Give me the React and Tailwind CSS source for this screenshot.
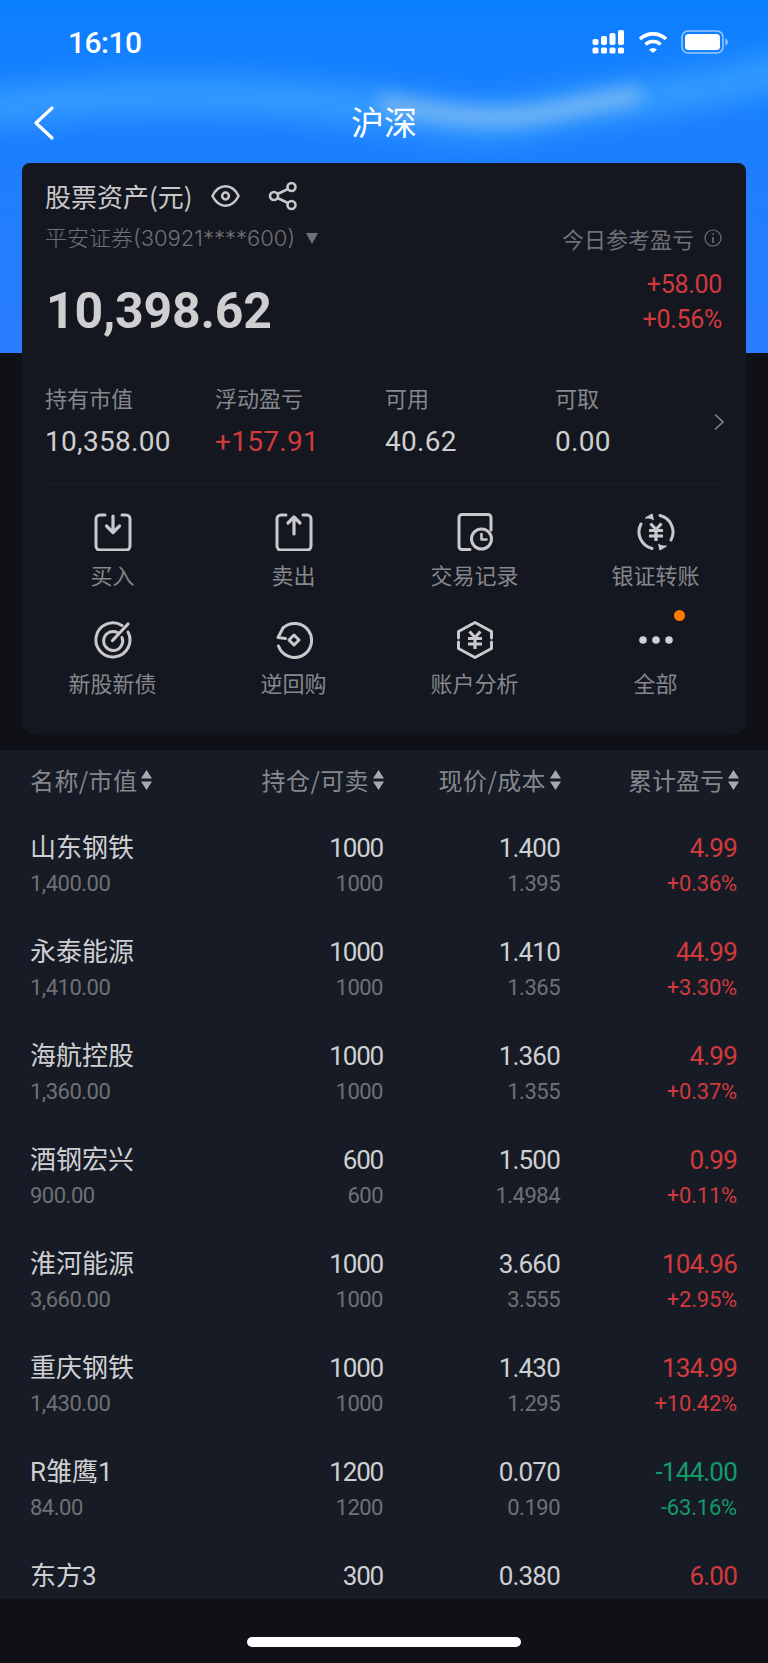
const cjk = '"Noto Sans CJK SC", sans-serif';
const num = 'Roboto, "Noto Sans CJK SC", sans-serif';

const STATS = [
  { label: '持有市值', value: '10,358.00' },
  { label: '浮动盈亏', value: '+157.91', red: true },
  { label: '可用', value: '40.62' },
  { label: '可取', value: '0.00' },
];

const HEADS = ['名称/市值', '持仓/可卖', '现价/成本', '累计盈亏'];

const ROWS = [
  ['山东钢铁', '1,400.00', '1000', '1000', '1.400', '1.395', '4.99', '+0.36%'],
  ['永泰能源', '1,410.00', '1000', '1000', '1.410', '1.365', '44.99', '+3.30%'],
  ['海航控股', '1,360.00', '1000', '1000', '1.360', '1.355', '4.99', '+0.37%'],
  ['酒钢宏兴', '900.00', '600', '600', '1.500', '1.4984', '0.99', '+0.11%'],
  ['淮河能源', '3,660.00', '1000', '1000', '3.660', '3.555', '104.96', '+2.95%'],
  ['重庆钢铁', '1,430.00', '1000', '1000', '1.430', '1.295', '134.99', '+10.42%'],
  ['R雏鹰1', '84.00', '1200', '1200', '0.070', '0.190', '-144.00', '-63.16%'],
  ['东方3', '', '300', '', '0.380', '', '6.00', ''],
];

function Glyph({ children }) {
  return (
    <svg width="38" height="38" viewBox="0 0 38 38" fill="none" stroke="#c9c9cb" strokeWidth="3" strokeLinecap="round" strokeLinejoin="round">
      {children}
    </svg>
  );
}

const Yen = () => <path d="M13.500 10.500 19 16.500l5.500-6M12 17.500h14M12 23h14M19 16.500V28" strokeWidth="3.200" strokeLinecap="butt" strokeLinejoin="miter" />;

const ICONS = {
  buy: (
    <Glyph>
      <path d="M11 2H6a4 4 0 0 0-4 4v27a4 4 0 0 0 4 4h26a4 4 0 0 0 4-4V6a4 4 0 0 0-4-4h-4" />
      <path d="M19 3v16M12.500 13l6.500 6.500 6.500-6.500" strokeWidth="3.200" />
    </Glyph>
  ),
  sell: (
    <Glyph>
      <path d="M11 2H6a4 4 0 0 0-4 4v27a4 4 0 0 0 4 4h26a4 4 0 0 0 4-4V6a4 4 0 0 0-4-4h-4" />
      <path d="M19 21V4M13 10l6-6 6 6" strokeWidth="3.200" />
    </Glyph>
  ),
  record: (
    <Glyph>
      <path d="M14 36.500H6a3 3 0 0 1-3-3V4.500a3 3 0 0 1 3-3h26a3 3 0 0 1 3 3V17" />
      <circle cx="25.500" cy="26" r="10" />
      <path d="M25.500 21v5.500h5" strokeWidth="2.600" />
    </Glyph>
  ),
  transfer: (
    <Glyph>
      <path d="M23 2.500a17 17 0 0 1 11 24.500M15 35.500A17 17 0 0 1 4 11" />
      <path d="M9 5l6-3.500 1 5M29 33l-6 3.500-1-5" fill="#c9c9cb" strokeWidth="1.500" />
      <Yen />
    </Glyph>
  ),
  target: (
    <Glyph>
      <path d="M28 4.500A17 17 0 1 0 34 11" />
      <path d="M23.500 11.500A9.500 9.500 0 1 0 28 16.500" />
      <path d="M18.500 19.500 34 3" strokeWidth="3.200" />
    </Glyph>
  ),
  repo: (
    <Glyph>
      <path d="M8 7A17 17 0 1 1 3.500 25" />
      <path d="M8 7 3 16.500l7.500 1" />
      <path d="M19 14 24 19 19 24 14 19z" />
    </Glyph>
  ),
  analysis: (
    <Glyph>
      <path d="M2.500 17v-6.500L19 1.500l16.500 9V17M2.500 21v6.500l16.500 9 16.500-9V21" />
      <Yen />
    </Glyph>
  ),
  more: (
    <svg width="38" height="38" viewBox="0 0 38 38" fill="#d0d0d2">
      <circle cx="6" cy="19" r="3.800" />
      <circle cx="19" cy="19" r="3.800" />
      <circle cx="32" cy="19" r="3.800" />
    </svg>
  ),
};

const ACTIONS = [
  { label: '买入', icon: 'buy' },
  { label: '卖出', icon: 'sell' },
  { label: '交易记录', icon: 'record' },
  { label: '银证转账', icon: 'transfer' },
  { label: '新股新债', icon: 'target' },
  { label: '逆回购', icon: 'repo' },
  { label: '账户分析', icon: 'analysis' },
  { label: '全部', icon: 'more', dot: true },
];

function StatusBar() {
  return (
    <div className="relative flex h-[84px] items-center justify-between pl-[68px] pr-[40px]">
      <span className="text-[30px] font-medium tracking-[-0.5px] text-white" style={{ fontFamily: num }}>16:10</span>
      <div className="flex items-center">
        <svg width="33" height="24" viewBox="0 0 32 24" fill="#fff">
          <rect x="0" y="9" width="6" height="6" rx="2" />
          <rect x="8.500" y="6" width="6" height="9" rx="2" />
          <rect x="17" y="3" width="6" height="12" rx="2" />
          <rect x="25.500" y="0" width="6" height="15" rx="2" />
          <rect x="0" y="17.500" width="6" height="6" rx="1.500" />
          <rect x="8.500" y="17.500" width="6" height="6" rx="1.500" />
          <rect x="17" y="17.500" width="6" height="6" rx="1.500" />
          <rect x="25.500" y="17.500" width="6" height="6" rx="1.500" />
        </svg>
        <svg className="ml-[13px]" width="30" height="22" viewBox="0 0 30 22" fill="none" stroke="#fff" strokeWidth="3.600">
          <path d="M2 8a19 19 0 0 1 26 0" />
          <path d="M7.500 13.500a11 11 0 0 1 15 0" />
          <path d="M11 18.500 15 22l4-3.500a6 6 0 0 0-8 0z" fill="#fff" stroke="none" />
        </svg>
        <svg className="ml-[13px]" width="47" height="24" viewBox="0 0 47 24">
          <rect x="1" y="1" width="41" height="22" rx="6" fill="none" stroke="#9cc8ff" strokeWidth="1.500" />
          <rect x="4" y="4" width="35" height="16" rx="3.500" fill="#fff" />
          <path d="M44.500 8.500c1.500.5 2.300 2 2.300 3.500s-.8 3-2.300 3.500z" fill="#9cc8ff" />
        </svg>
      </div>
    </div>
  );
}

function Sorter() {
  return (
    <svg className="ml-[4px]" width="11" height="20" viewBox="0 0 11 20" fill="#a7a9ae">
      <path d="M5.500 0 11 8.500H0zM0 11.500h11L5.500 20z" />
    </svg>
  );
}

function Holding({ row }) {
  const [name, value, qty, avail, price, cost, pnl, pct] = row;
  const color = pnl.startsWith('-') ? 'text-[#14996a]' : 'text-[#d13a3d]';
  const big = 'h-[36px] text-[26px] leading-[36px] tracking-[-0.8px]';
  const small = 'h-[35px] text-[22px] leading-[35px] tracking-[-0.5px]';
  return (
    <div className="mb-[6px] grid h-[98px] shrink-0 grid-cols-[170px_183px_177px_177px]" style={{ fontFamily: num }}>
      <div>
        <div className={`${big} text-[#cfcfd1] !tracking-normal`}>{name}</div>
        <div className={`${small} text-[#6e7176]`}>{value}</div>
      </div>
      <div className="text-right">
        <div className={`${big} text-[#cfcfd1] !tracking-[-1.2px]`}>{qty}</div>
        <div className={`${small} text-[#6e7176]`}>{avail}</div>
      </div>
      <div className="text-right">
        <div className={`${big} text-[#cfcfd1]`}>{price}</div>
        <div className={`${small} text-[#6e7176]`}>{cost}</div>
      </div>
      <div className="text-right">
        <div className={`${big} ${color}`}>{pnl}</div>
        <div className={`${small} !tracking-[-0.2px] ${color}`}>{pct}</div>
      </div>
    </div>
  );
}

export default function App() {
  return (
    <div className="flex h-[1663px] w-[768px] flex-col overflow-hidden bg-[#0f1116]">
      {/* blue top with the wave behind the nav */}
      <div className="relative h-[353px] shrink-0 bg-gradient-to-b from-[#0a80ff] to-[#2a7cff]">
        <svg className="absolute left-0 top-0" width="768" height="220" viewBox="0 0 768 220">
          <defs>
            <filter id="soft" x="-20%" y="-100%" width="140%" height="300%">
              <feGaussianBlur stdDeviation="14" />
            </filter>
            <filter id="softer" x="-20%" y="-100%" width="140%" height="300%">
              <feGaussianBlur stdDeviation="9" />
            </filter>
          </defs>
          <path d="M-20 110C100 92 220 92 340 104 430 114 480 130 540 114 620 98 700 96 790 68" fill="none" stroke="#4ab0ff" strokeOpacity="0.6" strokeWidth="36" filter="url(#soft)" />
          <path d="M380 102C430 112 490 124 550 112 585 105 610 100 640 94" fill="none" stroke="#c8d8e6" strokeOpacity="0.55" strokeWidth="15" filter="url(#softer)" />
        </svg>
        <StatusBar />
        <div className="relative flex h-[76px] items-center justify-center">
          <svg className="absolute left-[32px] top-[21px]" width="24" height="36" viewBox="0 0 24 36" fill="none" stroke="#fff" strokeWidth="3.200" strokeLinecap="round" strokeLinejoin="round">
            <path d="M20 3 4 18l16 15" />
          </svg>
          <span className="text-[33px] text-white" style={{ fontFamily: cjk }}>沪深</span>
        </div>
      </div>

      <div className="relative z-10 mx-[22px] -mt-[190px] h-[572px] shrink-0 rounded-t-[8px] rounded-b-[14px] bg-[#14171f] pt-[17px]" style={{ fontFamily: cjk }}>
        <div className="px-[23px]">
          <div className="flex h-[32px] items-center">
            <span className="text-[26px] leading-[32px] text-[#c8c8ca]">股票资产(元)</span>
            <svg className="ml-[18px]" width="29" height="24" viewBox="0 0 30 24" fill="none" stroke="#c8c8ca" strokeWidth="2.600">
              <path d="M1.500 12C5 5 10 2 15 2s10 3 13.500 10C25 19 20 22 15 22S5 19 1.500 12z" />
              <circle cx="15" cy="12" r="3.500" />
            </svg>
            <svg className="ml-[28px]" width="30" height="30" viewBox="0 0 30 30" fill="none" stroke="#c8c8ca" strokeWidth="2.600">
              <circle cx="23.500" cy="6" r="4" />
              <circle cx="6" cy="15" r="4" />
              <circle cx="23.500" cy="24" r="4" />
              <path d="M9.500 13 20 8M9.500 17 20 22" />
            </svg>
          </div>
          <div className="mt-[10px] flex h-[32px] items-center justify-between text-[22px] leading-[32px] text-[#6f7176]">
            <div className="flex items-center">
              <span className="font-light" style={{ fontFamily: 'Inter, "Noto Sans CJK SC", sans-serif' }}>平安证券(30921****600)</span>
              <svg className="ml-[11px]" width="12" height="11" viewBox="0 0 12 11" fill="#6f7176"><path d="M0 0h12L6 11z" /></svg>
            </div>
            <div className="mr-[1px] flex items-center">
              <span>今日参考盈亏</span>
              <svg className="ml-[10px]" width="18" height="18" viewBox="0 0 18 18" fill="none" stroke="#6f7176" strokeWidth="1.200">
                <circle cx="9" cy="9" r="8" />
                <path d="M9 8v6M9 4.500v1.500" strokeWidth="1.600" />
              </svg>
            </div>
          </div>
          <div className="mt-[11px] flex items-start justify-between" style={{ fontFamily: num }}>
            <div className="ml-[1px] mt-[19px] text-[50px] font-bold leading-[54px] tracking-[-0.2px] text-[#cfcfd1]">10,398.62</div>
            <div className="mr-[1px] mt-[2px] text-right text-[25px] leading-[35px] tracking-[-0.3px] text-[#d13a3d]">
              <div>+58.00</div>
              <div>+0.56%</div>
            </div>
          </div>
          <div className="relative mt-[43px] grid grid-cols-[170px_170px_170px_170px]">
            {STATS.map(s => (
              <div key={s.label}>
                <div className="h-[32px] text-[22px] leading-[32px] text-[#85878c]">{s.label}</div>
                <div className={`mt-[9px] h-[40px] text-[28px] leading-[40px] tracking-[0.3px] ${s.red ? 'text-[#d13a3d]' : 'text-[#cfcfd1]'}`} style={{ fontFamily: num }}>{s.value}</div>
              </div>
            ))}
            <svg className="absolute right-[-2px] top-[32px]" width="12" height="18" viewBox="0 0 12 18" fill="none" stroke="#85878c" strokeWidth="1.600">
              <path d="M2 1.500 10 9l-8 7.500" />
            </svg>
          </div>
          <div className="mt-[21px] h-px bg-[#1e2129]" />
        </div>
        <div className="mt-[29px] grid grid-cols-4 gap-y-[31px]">
          {ACTIONS.map(a => (
            <div key={a.label} className="relative flex flex-col items-center">
              {ICONS[a.icon]}
              {a.dot && <span className="absolute left-[109px] top-[-11px] h-[11px] w-[11px] rounded-full bg-[#ff7a00]" />}
              <span className="mt-[7px] h-[32px] text-[22px] leading-[32px] text-[#85878c]">{a.label}</span>
            </div>
          ))}
        </div>
      </div>

      <div className="mt-[15px] h-[849px] shrink-0 overflow-hidden bg-[#161b25] pl-[30px]" style={{ fontFamily: cjk }}>
        <div className="grid h-[59px] grid-cols-[170px_184px_177px_178px] items-center">
          {HEADS.map((h, i) => (
            <div key={h} className={`flex items-center text-[24px] text-[#85878c] ${i ? 'justify-end' : ''}`}>
              <span className={h.includes('/') ? 'tracking-[0.4px]' : ''}>{h}</span>
              <Sorter />
            </div>
          ))}
        </div>
        <div className="mt-[21px] flex flex-col">
          {ROWS.map(r => <Holding key={r[0]} row={r} />)}
        </div>
      </div>

      <div className="flex flex-1 justify-center pt-[38px]">
        <div className="h-[10px] w-[274px] rounded-full bg-white" />
      </div>
    </div>
  );
}
